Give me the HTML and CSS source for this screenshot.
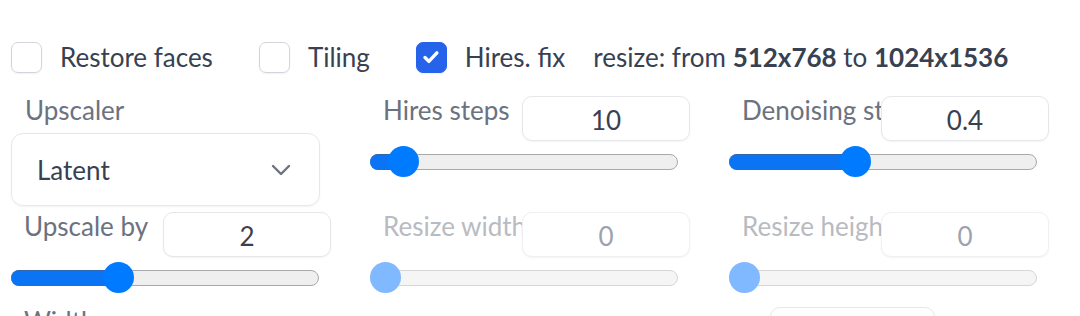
FILE: index.html
```html
<!DOCTYPE html>
<html lang="en">
<head>
<meta charset="UTF-8">
<meta name="viewport" content="width=device-width, initial-scale=1.0">
<title>Hires. fix</title>
<link rel="stylesheet" href="styles.css">
</head>
<body>
<div class="panel">
  <div class="checks">
    <label class="check"><span class="box"></span>Restore faces</label>
    <label class="check"><span class="box"></span>Tiling</label>
    <label class="check"><span class="box on"><svg viewBox="0 0 16 16" width="20" height="20"><path d="M3.2 8.4l3.1 3.1 6.4-6.8" fill="none" stroke="#fff" stroke-width="2.7" stroke-linecap="round" stroke-linejoin="round"/></svg></span>Hires. fix</label>
    <span class="info">resize: from <b>512x768</b> to <b>1024x1536</b></span>
  </div>

  <div class="grid">
    <div class="dropdown">
      <span class="label">Upscaler</span>
      <div class="select">
        <span>Latent</span>
        <svg class="chev" viewBox="0 0 20 12" width="20" height="12"><path d="M2 2l8 8 8-8" fill="none" stroke="#6b7280" stroke-width="2.4" stroke-linecap="round" stroke-linejoin="round"/></svg>
      </div>
    </div>

    <div class="slider">
      <div class="head"><span class="label">Hires steps</span><input class="num" value="10"></div>
      <div class="track" style="--v:0.0667"><div class="fill"></div><div class="thumb"></div></div>
    </div>

    <div class="slider">
      <div class="head"><span class="label">Denoising strength</span><input class="num" value="0.4"></div>
      <div class="track" style="--v:0.4"><div class="fill"></div><div class="thumb"></div></div>
    </div>

    <div class="slider">
      <div class="head"><span class="label">Upscale by</span><input class="num" value="2"></div>
      <div class="track" style="--v:0.3333"><div class="fill"></div><div class="thumb"></div></div>
    </div>

    <div class="slider off">
      <div class="head"><span class="label">Resize width to</span><input class="num" value="0" disabled></div>
      <div class="track" style="--v:0"><div class="fill"></div><div class="thumb"></div></div>
    </div>

    <div class="slider off">
      <div class="head"><span class="label">Resize height to</span><input class="num" value="0" disabled></div>
      <div class="track" style="--v:0"><div class="fill"></div><div class="thumb"></div></div>
    </div>
  </div>

  <div class="slider wide">
    <div class="head"><span class="label">Width</span><input class="num" value="512"></div>
  </div>
</div>
</body>
</html>
```

FILE: styles.css
```css
body {
  margin: 0;
  font-family: Lato, "Noto Sans", sans-serif;
  font-size: 26px;
  color: #374151;
  background: #fff;
  overflow: hidden;
}

.panel {
  padding: 36px 0 0 11px;
}

/* checkbox row */
.checks {
  display: flex;
  align-items: center;
  height: 42px;
}
.check {
  display: flex;
  align-items: center;
  gap: 18px;
  margin-right: 46px;
}
.box {
  width: 31px;
  height: 31px;
  box-sizing: border-box;
  border: 1px solid #d1d5db;
  border-radius: 7px;
  box-shadow: 0 1px 2px rgba(0, 0, 0, 0.06);
  display: flex;
  align-items: center;
  justify-content: center;
}
.box.on {
  background: #2563eb;
  border-color: #2563eb;
}
.info {
  margin-left: -18px;
}
.info b {
  font-weight: 700;
}

/* controls */
.grid {
  display: grid;
  grid-template-columns: repeat(3, 320px);
  column-gap: 39px;
  row-gap: 6px;
  margin-top: 18px;
}
.label {
  color: #6b7280;
  padding-left: 14px;
  white-space: nowrap;
  overflow-x: clip;
  min-width: 0;
  line-height: 34px;
  margin-top: -3px;
}

.dropdown {
  width: 309px;
  display: flex;
  flex-direction: column;
}
.dropdown .label {
  height: 34px;
  margin-bottom: 6px;
}
.select {
  height: 73px;
  box-sizing: border-box;
  border: 1px solid #e5e7eb;
  border-radius: 12px;
  box-shadow: 0 1px 2px rgba(0, 0, 0, 0.05);
  display: flex;
  align-items: center;
  justify-content: space-between;
  padding: 0 28px 0 25px;
}

.slider .head {
  display: flex;
  align-items: flex-start;
  height: 45px;
}
.slider .label {
  flex: 1;
  padding-left: 13px;
}
.num {
  flex: none;
  width: 168px;
  height: 45px;
  box-sizing: border-box;
  border: 1px solid #e5e7eb;
  border-radius: 10px;
  box-shadow: 0 1px 2px rgba(0, 0, 0, 0.05);
  font: inherit;
  color: #374151;
  text-align: center;
  padding: 2px 0 0;
  background: #fff;
}

.track {
  position: relative;
  width: 308px;
  height: 16px;
  margin-top: 13px;
  box-sizing: border-box;
  border: 1px solid #a9a9a9;
  border-radius: 8px;
  background: #efefef;
}
.fill {
  position: absolute;
  left: -1px;
  top: -1px;
  bottom: -1px;
  width: calc(15.5px + 277px * var(--v));
  background: #0b74f5;
  border-top: 1px solid #2f66b0;
  border-radius: 8px 0 0 8px;
  box-sizing: border-box;
}
.thumb {
  position: absolute;
  top: -9px;
  left: calc(277px * var(--v) - 1px);
  width: 31px;
  height: 31px;
  border-radius: 50%;
  background: #007bff;
}

.off .label {
  color: #b8bbc1;
}
.off .num {
  color: #9ca3af;
  border-color: #f0f0f2;
}
.off .track {
  border-color: #d6d6d6;
  background: #f5f5f5;
}
.off .fill {
  display: none;
}
.off .thumb {
  background: #80b9ff;
}

.wide {
  width: 924px;
  margin-top: 21px;
}
.wide .num {
  width: 165px;
}
```
